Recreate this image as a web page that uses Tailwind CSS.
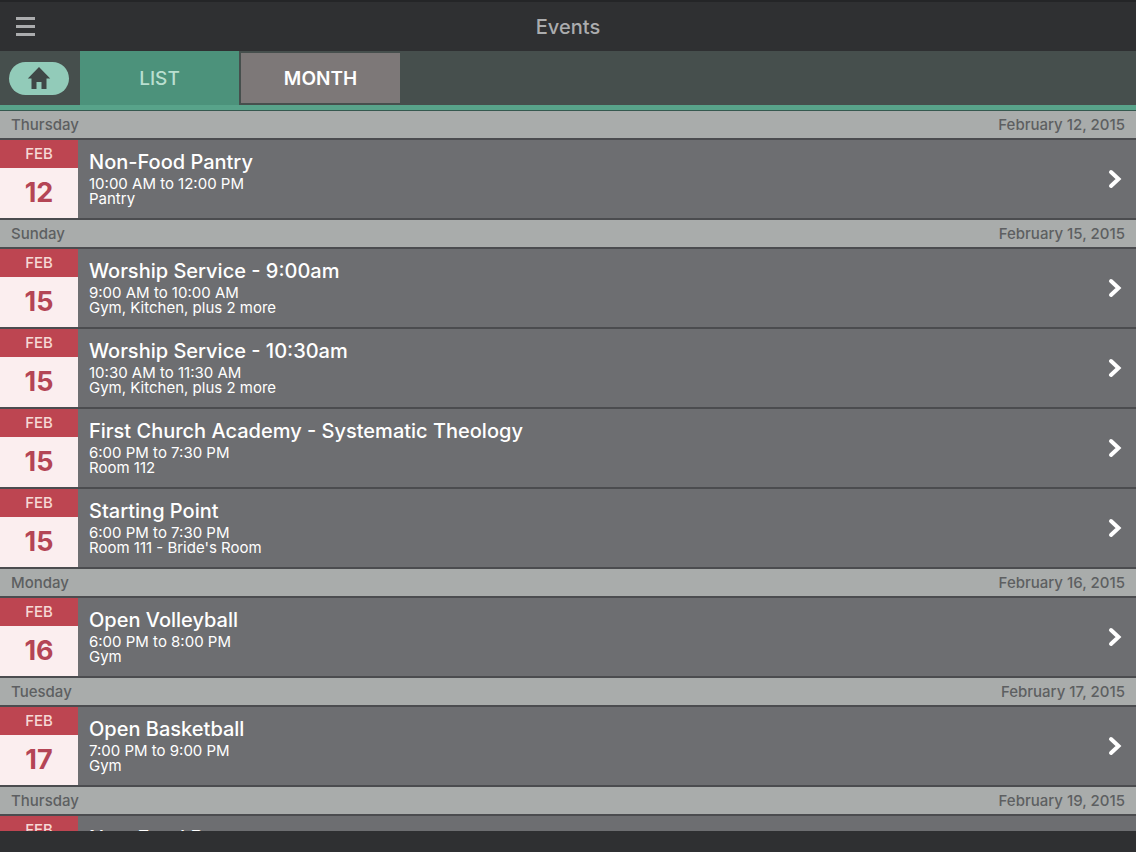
<!DOCTYPE html>
<html lang="en">
<head>
    <meta charset="UTF-8">
    <meta name="viewport" content="width=device-width, initial-scale=1.0">
    <title>Events</title>
    <script src="https://cdn.jsdelivr.net/npm/@tailwindcss/browser@4"></script>
</head>
<body class="flex flex-col h-screen overflow-hidden bg-[#2f3032] font-['Inter',sans-serif]">

    <!-- Title bar -->
    <header class="grid grid-cols-3 items-center h-[51px] shrink-0 px-[15px] border-t-2 border-[#242527]">
        <button type="button" aria-label="Menu" class="w-5 h-5">
            <svg viewBox="0 0 20 20" class="w-5 h-5 fill-[#abacae]">
                <rect x="1" y="0" width="19" height="3"/>
                <rect x="1" y="8" width="19" height="3"/>
                <rect x="1" y="16" width="19" height="3"/>
            </svg>
        </button>
        <h1 class="text-center text-[20px] font-medium text-[#abacae]">Events</h1>
    </header>

    <!-- Tabs -->
    <nav class="flex h-[59px] shrink-0 bg-[#464f4d] border-b-5 border-[#58a38a]">
        <div class="flex items-center w-20 pl-[9px]">
            <a href="#" aria-label="Home" class="flex items-center justify-center w-[60px] h-[33px] rounded-full bg-[#92cbb9]">
                <svg viewBox="0 0 24 22" class="w-6 h-[22px] fill-[#3f4746]">
                    <path d="M12 0L0.800 11.500H4.500V22H9.500V15H14.500V22H19.500V11.500H23.200Z"/>
                </svg>
            </a>
        </div>
        <button type="button" class="w-[159px] pt-0.5 bg-[#4c927b] text-[19px] font-medium text-[#b9dfd0]">LIST</button>
        <button type="button" class="w-[159px] my-0.5 ml-0.5 pt-0.5 bg-[#7d7878] text-[19px] font-semibold text-white">MONTH</button>
    </nav>

    <!-- Event list -->
    <main id="events" class="flex-1 min-h-0 overflow-y-auto [scrollbar-width:none] border-t border-[#35594f] bg-[#6d6e71]"></main>

    <footer class="h-[21px] shrink-0 bg-[#2f3032]"></footer>

    <script>
        const days = [
            { day: 'Thursday', date: 12, events: [
                { title: 'Non-Food Pantry', time: '10:00 AM to 12:00 PM', place: 'Pantry' }
            ]},
            { day: 'Sunday', date: 15, events: [
                { title: 'Worship Service - 9:00am', time: '9:00 AM to 10:00 AM', place: 'Gym, Kitchen, plus 2 more' },
                { title: 'Worship Service - 10:30am', time: '10:30 AM to 11:30 AM', place: 'Gym, Kitchen, plus 2 more' },
                { title: 'First Church Academy - Systematic Theology', time: '6:00 PM to 7:30 PM', place: 'Room 112' },
                { title: 'Starting Point', time: '6:00 PM to 7:30 PM', place: "Room 111 - Bride's Room" }
            ]},
            { day: 'Monday', date: 16, events: [
                { title: 'Open Volleyball', time: '6:00 PM to 8:00 PM', place: 'Gym' }
            ]},
            { day: 'Tuesday', date: 17, events: [
                { title: 'Open Basketball', time: '7:00 PM to 9:00 PM', place: 'Gym' }
            ]},
            { day: 'Thursday', date: 19, events: [
                { title: 'Non-Food Pantry', time: '10:00 AM to 12:00 PM', place: 'Pantry' }
            ]}
        ];

        const eventRow = (event, date) => `
            <li>
                <a href="#" class="flex h-20 border-b-2 border-[#4b4c4f]">
                    <div class="flex flex-col w-[78px] shrink-0 text-center">
                        <div class="h-7 bg-[#bd4551] text-[15px] leading-7 font-medium text-[#f6d9d6]">FEB</div>
                        <div class="flex-1 bg-[#fbeeef] text-[27px] leading-[50px] font-bold text-[#b44555]">${date}</div>
                    </div>
                    <div class="flex-1 min-w-0 pl-[11px] pt-2 text-white">
                        <h3 class="text-[20px] leading-7 font-medium truncate">${event.title}</h3>
                        <p class="text-[15px] leading-[15px]">${event.time}</p>
                        <p class="text-[15px] leading-[15px]">${event.place}</p>
                    </div>
                    <svg viewBox="0 0 14 20" class="w-3.5 h-5 mr-3.5 self-center shrink-0 fill-none stroke-white stroke-4">
                        <path stroke-linecap="round" d="M3 3L10.500 10L3 17"/>
                    </svg>
                </a>
            </li>`;

        document.getElementById('events').innerHTML = days.map(d => `
            <section>
                <h2 class="flex items-center justify-between h-[29px] px-[11px] pt-0.5 bg-[#a9acab] border-b-2 border-[#4b4c4f] text-[15px] font-medium text-[#5d5f61]">
                    <span>${d.day}</span>
                    <span>February ${d.date}, 2015</span>
                </h2>
                <ul>${d.events.map(e => eventRow(e, d.date)).join('')}</ul>
            </section>`).join('');
    </script>
</body>
</html>
